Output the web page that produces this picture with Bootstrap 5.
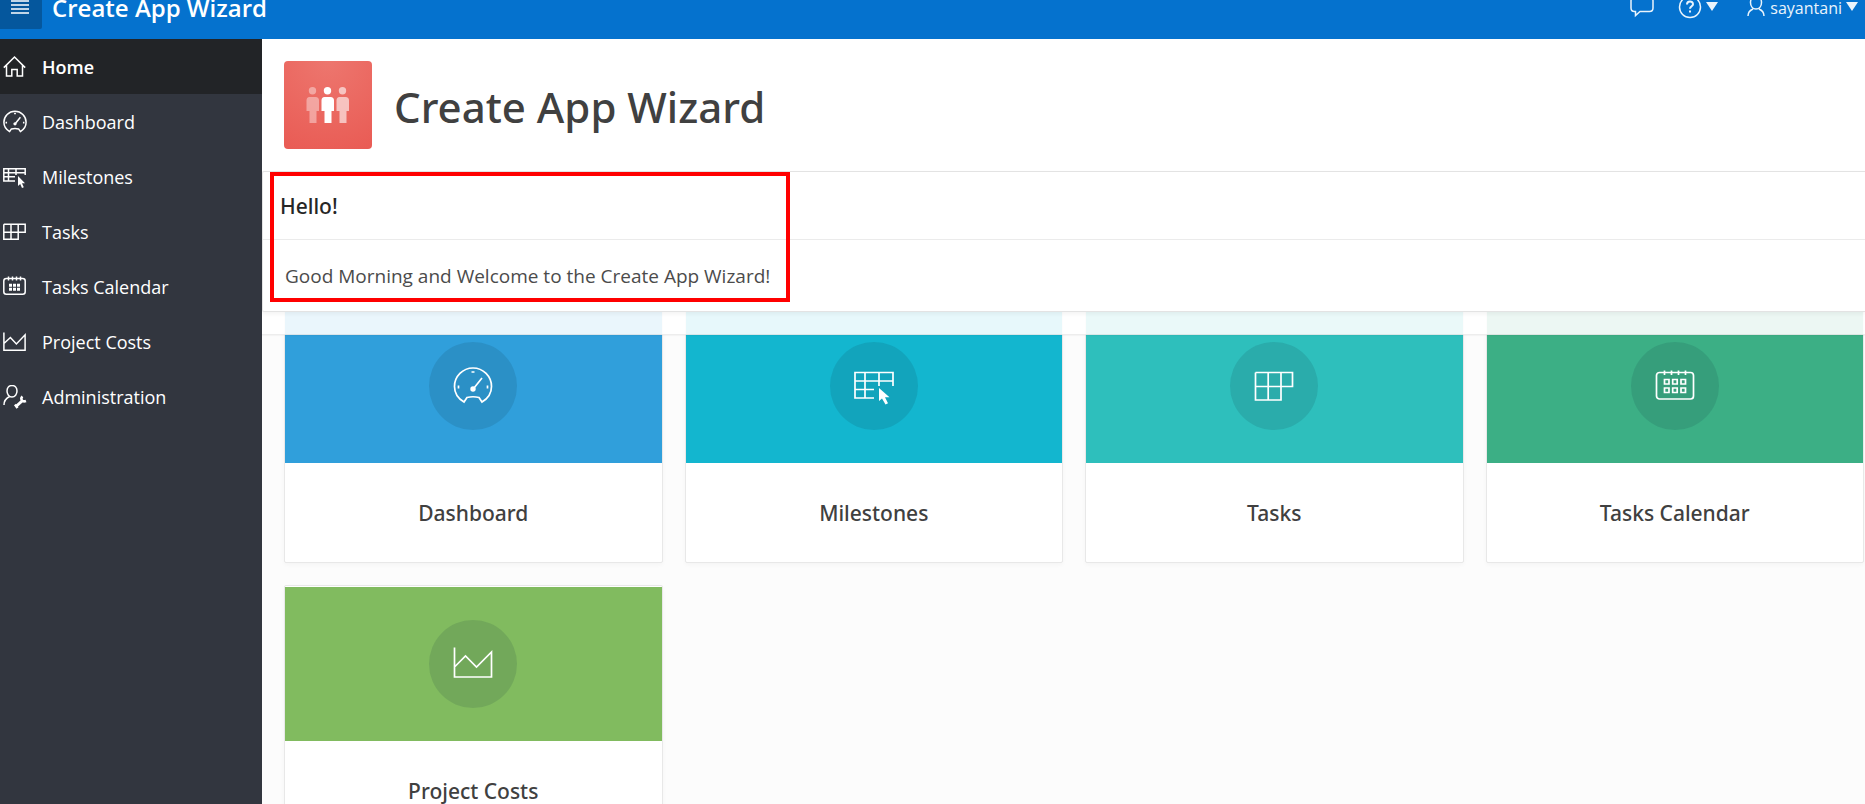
<!DOCTYPE html>
<html lang="en">
<head>
<meta charset="utf-8">
<meta name="viewport" content="width=device-width, initial-scale=1">
<title>Create App Wizard</title>
<link rel="stylesheet" href="https://cdn.jsdelivr.net/npm/bootstrap@5.3.0/dist/css/bootstrap.min.css">
<style>
  body { font-family: "Open Sans", "Noto Sans", sans-serif; background: #fcfcfc; color: #404040; }
  svg { fill: none; stroke: currentColor; display: block; flex: none; }
  .solid { fill: currentColor; stroke: none; }

  /* top bar, scrolled partly out of view */
  .app-bar { background: #0572ce; height: 63px; margin-top: -24px; padding-right: 7px; flex: none; }
  .app-bar .menu-toggle { background: #05579d; width: 42px; height: 42px; border-radius: 0 2px 2px 0; padding: 0 0 0 11px; }
  .app-name { font-size: 24px; font-weight: 600; margin-left: 10px; }
  .bar-link { font-size: 16px; line-height: 20px; color: #eaf4fc; }

  .side-nav { width: 262px; background: #32363f; flex: none; }
  .side-nav .nav-link { height: 55px; padding: 1px 0 0 3px; gap: 15px; font-size: 18px; color: #fff; border-radius: 0; }
  .side-nav .nav-link.active { background: #222427; font-weight: 600; }

  .page-head { background: rgba(255,255,255,.9); border-bottom: 1px solid rgba(0,0,0,.07); box-shadow: 0 1px 1px rgba(0,0,0,.03); padding-bottom: 22px; z-index: 2; }
  .hero-title, .region-title, .card-name { font-family: "Noto Sans", "Open Sans", sans-serif; font-weight: 500; }
  .hero { padding: 22px; gap: 22px; background: #fff; }
  .hero-tile { width: 88px; height: 88px; border-radius: 4px; background: radial-gradient(circle at 50% 0, #ed766e, #e95b54 100%); color: #fff; }
  .hero-title { font-size: 42px; line-height: 60px; padding-top: 4px; }
  .region { background: #fff; border: 1px solid #e3e3e3; border-right: 0; border-radius: 2px 0 0 2px; box-shadow: 0 2px 4px rgba(0,0,0,.05); }
  .region-title { font-size: 21px; line-height: 24px; padding: 22px 17px 21px; border-bottom: 1px solid #ebebeb; color: #262626; }
  .region-text { font-size: 19px; line-height: 24px; padding: 24px 22px 23px; color: #4b4b4b; }
  .highlight { left: 7px; top: 0; width: 520px; height: 130px; border: 4px solid #f00; }

  /* the card grid slides under the translucent page header */
  .card-area { display: flow-root; padding: 0 1px 0 22px; margin-top: -28px; }
  .card-area .row { --bs-gutter-x: 22px; --bs-gutter-y: 22px; }
  .app-card { border: 1px solid #e8e8e8; border-radius: 2px; padding-top: 1px; background: #fff; box-shadow: 0 2px 4px rgba(0,0,0,.03); color: #404040; }
  .card-tone { height: 154px; color: #fff; }
  .card-dot { width: 88px; height: 88px; border-radius: 50%; background: rgba(16,48,64,.13); }
  .card-name { font-size: 21px; line-height: 28px; padding: 36px 0 35px; }
  .tone-1 { background: #309fdb; } .tone-2 { background: #13b6cf; } .tone-3 { background: #2ebfbc; }
  .tone-4 { background: #3caf85; } .tone-5 { background: #81bb5f; }
</style>
</head>
<body class="vh-100 overflow-hidden d-flex flex-column">

<svg width="0" height="0" class="position-absolute">
  <symbol id="i-home" viewBox="0 0 24 24"><path d="M.8 12.6 11.5 2l10.700 10.600M3.500 10.500V21h5.300v-6.500h5.400V21h5.300V10.500" stroke-width="1.5"/></symbol>
  <symbol id="i-gauge" viewBox="0 0 40 40"><path d="M11 36C5 32.500 1.500 27 1.500 20.500a18.500 18.500 0 0 1 37 0C38.500 27 35 32.500 29 36l-3-4.500q-6-1.500-12 0Z" /><path d="m21 22 8-10M18.500 6h3M5.500 19.500v3M34.500 19.500v3"/><circle cx="20" cy="23" r="2.700" class="solid"/></symbol>
  <symbol id="i-chart" viewBox="0 0 24 24"><path d="M.9 2.500v17.700h21.200V4.800l-8.700 9.200-6-6.500L.9 13.500" stroke-width="1.500"/></symbol>
</svg>

<header class="app-bar d-flex align-items-center text-white">
  <button type="button" class="menu-toggle border-0 text-white" aria-label="Toggle navigation">
    <svg width="18" height="18" viewBox="0 0 18 18" stroke-width="1.500"><path d="M0 2h18M0 6h18M0 10h18M0 14h18"/></svg>
  </button>
  <a href="#" class="app-name text-white text-decoration-none">Create App Wizard</a>
  <nav class="d-flex align-items-center ms-auto" aria-label="Account">
    <a href="#" class="bar-link me-4" aria-label="Feedback">
      <svg width="24" height="24" viewBox="0 0 24 24" stroke-width="1.500"><path d="M4.500 1.500h15q3.500 0 3.500 3.500v7q0 3.500-3.500 3.500H10l-4.500 4v-4h-1Q1 15.500 1 12V5q0-3.500 3.500-3.500Z"/></svg>
    </a>
    <a href="#" class="bar-link d-flex align-items-center gap-1 text-decoration-none" aria-label="Help">
      <svg width="24" height="24" viewBox="0 0 24 24" stroke-width="1.500"><circle cx="12" cy="11" r="10.500"/><path d="M9 8.500c0-4 6-4 6-.3 0 2-3 2.200-3 4.600M12 14.500v2" stroke-width="2"/></svg>
      <svg width="12" height="12" viewBox="0 0 12 12"><path class="solid" d="M0 0h12L6 9Z"/></svg>
    </a>
    <a href="#" class="bar-link d-flex align-items-center text-decoration-none gap-1 ms-4">
      <svg width="24" height="24" viewBox="0 0 24 24" stroke-width="1.500"><path d="M14 .5c3.500 0 5.500 2.600 5.500 6s-2 6.500-5.500 6.500-5.500-3.100-5.500-6.500 2-6 5.500-6ZM6 20c0-3.500 1.500-5.500 5-7M22 20c0-3.500-1.500-5.500-5-7"/></svg>
      <span>sayantani</span>
      <svg width="12" height="12" viewBox="0 0 12 12"><path class="solid" d="M0 0h12L6 9Z"/></svg>
    </a>
  </nav>
</header>

<div class="d-flex flex-grow-1 overflow-hidden">
  <nav class="side-nav nav flex-column flex-nowrap" aria-label="Main">
    <a href="#" class="nav-link active d-flex align-items-center" aria-current="page"><svg width="24" height="24"><use href="#i-home"/></svg>Home</a>
    <a href="#" class="nav-link d-flex align-items-center"><svg width="24" height="24" stroke-width="2.500"><use href="#i-gauge"/></svg>Dashboard</a>
    <a href="#" class="nav-link d-flex align-items-center"><svg width="24" height="24" viewBox="0 0 24 24" stroke-width="1.500"><path d="M12 16H.8V3.700h21.400V10M.8 7.700h21.400M.8 11.800H12M5.500 3.700V16M13 3.700V10"/><path class="solid" d="M15 11v10l2.200-2 1.800 4 1.800-.8-1.800-3.900h3Z"/></svg>Milestones</a>
    <a href="#" class="nav-link d-flex align-items-center"><svg width="24" height="24" viewBox="0 0 24 24" stroke-width="1.500"><path d="M.8 4.300h21.400v8H.8M.8 4.300v15h14.400v-15M8 4.300v15"/></svg>Tasks</a>
    <a href="#" class="nav-link d-flex align-items-center"><svg width="24" height="24" viewBox="0 0 24 24" stroke-width="1.500"><rect x=".8" y="3.500" width="21.400" height="15.700" rx="2.500"/><path d="M5.500 1.500v4M9.500 1.500v4M13.500 1.500v4M17.500 1.500v4"/><path stroke-width="3" d="M6 10.300h3m1 0h3m1 0h3M6 14.300h3m1 0h3m1 0h3"/></svg>Tasks Calendar</a>
    <a href="#" class="nav-link d-flex align-items-center"><svg width="24" height="24"><use href="#i-chart"/></svg>Project Costs</a>
    <a href="#" class="nav-link d-flex align-items-center"><svg width="24" height="24" viewBox="0 0 24 24" stroke-width="1.500"><path d="M9 .5c3 0 5 2.400 5 5.500s-2 6-5 6-5-2.900-5-6S6 .5 9 .5ZM1 20c0-3.500 1.500-6.500 5.500-8.500"/><path d="m13 21.500 6-5.500" stroke-width="3"/><path d="M19.500 11.500c-2.500 2-.5 6 3.500 4.500M12 19.500l2.500 3.500" stroke-width="2.500"/></svg>Administration</a>
  </nav>

  <main class="flex-grow-1 overflow-hidden">
    <div class="page-head position-relative">
      <div class="hero d-flex align-items-center">
        <div class="hero-tile d-flex align-items-center justify-content-center">
          <svg width="44" height="36" viewBox="0 0 44 36">
            <g class="solid" opacity=".4"><circle cx="6.500" cy="3.700" r="3.700"/><path d="M3.500 10h6q3.500 0 3.500 3.500V24h-2.500v12h-7V24H.5V13.500Q.5 10 3.500 10Z"/></g>
            <g class="solid"><circle cx="21.500" cy="3.700" r="3.700"/><path d="M18.500 10h6q3.500 0 3.500 3.500V24h-2.500v12h-7V24h-3V13.500q0-3.500 3-3.500Z"/></g>
            <g class="solid" opacity=".6"><circle cx="36.500" cy="3.700" r="3.700"/><path d="M33.500 10h6q3.500 0 3.500 3.500V24h-2.500v12h-7V24h-3V13.500q0-3.500 3-3.500Z"/></g>
          </svg>
        </div>
        <h1 class="hero-title mb-0">Create App Wizard</h1>
      </div>
      <section class="region position-relative">
        <h2 class="region-title mb-0">Hello!</h2>
        <p class="region-text mb-0">Good Morning and Welcome to the Create App Wizard!</p>
        <div class="highlight position-absolute"></div>
      </section>
    </div>

    <div class="card-area">
      <div class="row row-cols-4">
        <div class="col"><a href="#" class="app-card d-block text-decoration-none text-center">
          <div class="card-tone tone-1 d-flex align-items-center justify-content-center"><span class="card-dot d-flex align-items-center justify-content-center"><svg width="40" height="40" stroke-width="1.700"><use href="#i-gauge"/></svg></span></div>
          <h3 class="card-name mb-0">Dashboard</h3></a></div>
        <div class="col"><a href="#" class="app-card d-block text-decoration-none text-center">
          <div class="card-tone tone-2 d-flex align-items-center justify-content-center"><span class="card-dot d-flex align-items-center justify-content-center"><svg width="40" height="40" viewBox="0 0 40 40" stroke-width="1.700"><path d="M20 32H1V6.500h38V20M1 15h38M1 23.500h19M11 6.500V32M25 6.500V20"/><path class="solid" d="M25 22v13l3-2.500 3.500 6 2.500-1.200-3-6h4.500Z"/></svg></span></div>
          <h3 class="card-name mb-0">Milestones</h3></a></div>
        <div class="col"><a href="#" class="app-card d-block text-decoration-none text-center">
          <div class="card-tone tone-3 d-flex align-items-center justify-content-center"><span class="card-dot d-flex align-items-center justify-content-center"><svg width="40" height="40" viewBox="0 0 40 40" stroke-width="1.700"><path d="M1.500 6.500h37v14h-37M1.500 6.500v27.500H27V6.500M14.200 6.500V34"/></svg></span></div>
          <h3 class="card-name mb-0">Tasks</h3></a></div>
        <div class="col"><a href="#" class="app-card d-block text-decoration-none text-center">
          <div class="card-tone tone-4 d-flex align-items-center justify-content-center"><span class="card-dot d-flex align-items-center justify-content-center"><svg width="40" height="40" viewBox="0 0 40 40" stroke-width="1.700"><rect x="1.500" y="6.500" width="37" height="26.500" rx="3"/><path d="M9.500 4.500v4.500M16.500 4.500v4.500M23.500 4.500v4.500M30.500 4.500v4.500"/><path d="M9.500 13.500h4.500v4.500H9.500ZM17.700 13.500h4.500v4.500h-4.500ZM26 13.500h4.500v4.500H26ZM9.500 22h4.500v4.500H9.500ZM17.700 22h4.500v4.500h-4.500ZM26 22h4.500v4.500H26Z"/></svg></span></div>
          <h3 class="card-name mb-0">Tasks Calendar</h3></a></div>
        <div class="col"><a href="#" class="app-card d-block text-decoration-none text-center">
          <div class="card-tone tone-5 d-flex align-items-center justify-content-center"><span class="card-dot d-flex align-items-center justify-content-center"><svg width="40" height="40" viewBox="0 0 40 40" stroke-width="1.700"><path d="M1.500 3.500V33h37V8L23.500 23 12.500 12l-11 11"/></svg></span></div>
          <h3 class="card-name mb-0">Project Costs</h3></a></div>
      </div>
    </div>
  </main>
</div>
<script src="https://cdn.jsdelivr.net/npm/bootstrap@5.3.0/dist/js/bootstrap.bundle.min.js"></script>
</body>
</html>
